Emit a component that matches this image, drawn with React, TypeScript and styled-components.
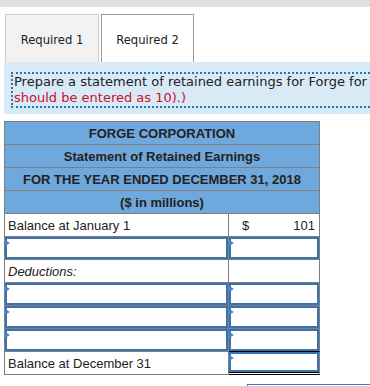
import React from "react";
import styled, { createGlobalStyle } from "styled-components";

const Global = createGlobalStyle`
  html, body {
    margin: 0;
    padding: 0;
    background: #ffffff;
    overflow: hidden;
  }
  body {
    font-family: "DejaVu Sans", Verdana, sans-serif;
  }
`;

const Page = styled.div`
  width: 370px;
  height: 386px;
  overflow: hidden;
`;

const TopBar = styled.div`
  height: 7px;
  background: #dfdfdf;
`;

const TabList = styled.div`
  display: flex;
  gap: 2px;
  margin-top: 7px;
  padding-left: 5px;
`;

const Tab = styled.div<{ $active?: boolean; $w: number }>`
  box-sizing: border-box;
  width: ${(p) => p.$w}px;
  height: 48px;
  padding-top: 17px;
  text-align: center;
  font-family: "DejaVu Sans", Verdana, sans-serif;
  font-size: 11.6px;
  line-height: 16px;
  color: #222;
  background: ${(p) => (p.$active ? "#ffffff" : "#f2f2f2")};
  border: 1px solid ${(p) => (p.$active ? "#999999" : "#cccccc")};
  border-bottom: none;
`;

const Instructions = styled.div`
  box-sizing: border-box;
  height: 52px;
  margin-left: 4px;
  padding: 10px 0 0 7px;
  background: #d9eaf7;
  overflow: hidden;
`;

const Prompt = styled.div`
  width: 520px;
  padding-left: 1px;
  border: 2px dotted #2f74b5;
  border-right: none;
  font-size: 13px;
  line-height: 16px;
  color: #222;
  white-space: nowrap;
`;

const Note = styled.span`
  color: #c8102e;
`;

const Sheet = styled.div`
  box-sizing: border-box;
  width: 316px;
  margin: 7px 0 0 4px;
  display: grid;
  grid-template-columns: 224px 91px;
  border-top: 1px solid #7f7f7f;
  border-left: 1px solid #7f7f7f;
  font-family: "Liberation Sans", Arial, sans-serif;
  font-size: 13px;
  color: #222;
`;

const TitleRow = styled.div`
  grid-column: 1 / -1;
  box-sizing: border-box;
  height: 23px;
  display: flex;
  align-items: center;
  justify-content: center;
  background: #6fa8dc;
  border-right: 1px solid #7f7f7f;
  border-bottom: 1px solid #7f7f7f;
  font-weight: bold;
`;

const Cell = styled.div<{ $italic?: boolean; $rule?: boolean; $total?: boolean }>`
  box-sizing: border-box;
  height: 23px;
  display: flex;
  align-items: center;
  padding: 0 3px;
  border-right: 1px solid #7f7f7f;
  border-bottom: ${(p) =>
    p.$total ? "3px double #000000" : `1px solid ${p.$rule ? "#000000" : "#7f7f7f"}`};
  font-style: ${(p) => (p.$italic ? "italic" : "normal")};
`;

const EntryCell = styled(Cell)`
  padding: 0;
  align-items: stretch;
`;

const AmountCell = styled(Cell)`
  justify-content: space-between;
  padding: 0 4px 0 13px;
`;

const InputBox = styled.div`
  position: relative;
  flex: 1;
  box-sizing: border-box;
  border: 2px solid #3a72b2;
  background: #ffffff;

  &::before {
    content: "";
    position: absolute;
    left: -2px;
    top: 1px;
    width: 0;
    height: 0;
    border-left: 5px solid #3f86d0;
    border-top: 3px solid transparent;
    border-bottom: 3px solid transparent;
  }
`;

const Footer = styled.div`
  margin-top: 9px;
  padding-left: 247px;
`;

const NavButton = styled.div`
  box-sizing: border-box;
  width: 150px;
  height: 34px;
  padding-top: 8px;
  border: 1px solid #3b7cc2;
  background: #ffffff;
  font-family: "DejaVu Sans", Verdana, sans-serif;
  font-size: 12px;
  line-height: 16px;
  text-align: center;
  color: #3b7cc2;
`;

const entryRow = (key: string, rule = false) => (
  <React.Fragment key={key}>
    <EntryCell>
      <InputBox />
    </EntryCell>
    <EntryCell $rule={rule}>
      <InputBox />
    </EntryCell>
  </React.Fragment>
);

export default function App() {
  return (
    <Page>
      <Global />
      <TopBar />
      <TabList>
        <Tab $w={94}>Required 1</Tab>
        <Tab $w={93} $active>
          Required 2
        </Tab>
      </TabList>
      <Instructions>
        <Prompt>
          <div>
            Prepare a statement of retained earnings for Forge for 2018. (Enter your answers in millions (i.e., 10,000,000
          </div>
          <Note>should be entered as 10).)</Note>
        </Prompt>
      </Instructions>
      <Sheet>
        <TitleRow>FORGE CORPORATION</TitleRow>
        <TitleRow>Statement of Retained Earnings</TitleRow>
        <TitleRow>FOR THE YEAR ENDED DECEMBER 31, 2018</TitleRow>
        <TitleRow>($ in millions)</TitleRow>

        <Cell>Balance at January 1</Cell>
        <AmountCell>
          <span>$</span>
          <span>101</span>
        </AmountCell>

        {entryRow("added")}

        <Cell $italic>Deductions:</Cell>
        <Cell />

        {entryRow("d1")}
        {entryRow("d2")}
        {entryRow("d3", true)}

        <Cell>Balance at December 31</Cell>
        <EntryCell $total>
          <InputBox />
        </EntryCell>
      </Sheet>
      <Footer>
        <NavButton>Required 2 ›</NavButton>
      </Footer>
    </Page>
  );
}
